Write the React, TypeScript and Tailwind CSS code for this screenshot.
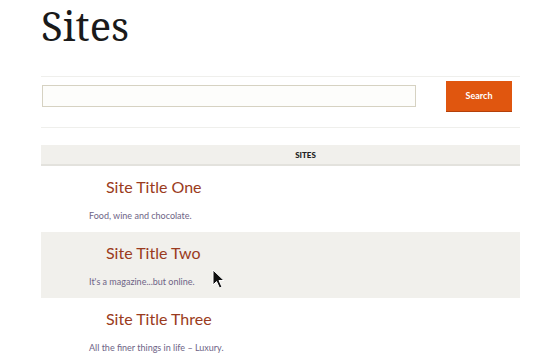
const sites = [
  { title: "Site Title One", desc: "Food, wine and chocolate." },
  { title: "Site Title Two", desc: "It's a magazine...but online." },
  { title: "Site Title Three", desc: "All the finer things in life – Luxury." },
]

export default function App() {
  return (
    <div className="relative w-[559px] h-[360px] overflow-hidden bg-white font-['Lato',sans-serif]">
      <div className="ml-[41px] w-[479px]">
        {/* Heading */}
        <h1 className="h-[76px] text-[40px] leading-[52px] text-[#1a1a1a] font-['Noto_Serif','Liberation_Serif',serif]">
          Sites
        </h1>

        {/* Search */}
        <div className="border-t border-b border-[#efefec] h-[52px] flex items-start pt-[4px]">
          <input
            type="text"
            className="ml-[1px] mt-[4px] w-[374px] h-[22px] border border-[#d6d2c2] bg-[#fdfdfb] outline-none"
          />
          <button className="ml-[30px] w-[66px] h-[30px] bg-[#e0560f] text-white text-[9px] font-bold shadow-[0_1px_0_#b4400a]">
            Search
          </button>
        </div>

        {/* Table */}
        <div className="mt-[17px]">
          <div className="h-[21px] bg-[#f1f0ec] border-b-2 border-[#e3e2dd] flex items-center justify-center text-[8px] font-black text-[#222] pl-[50px]">
            SITES
          </div>
          {sites.map((s, i) => (
            <div key={s.title} className={`h-[66px] ${i % 2 === 1 ? "bg-[#f1f0ec]" : "bg-white"}`}>
              <div className="pt-[10px] pl-[65px] text-[16px] leading-[22px] text-[#9a3b20]">{s.title}</div>
              <div className="pt-[12px] pl-[48px] text-[9px] leading-[12px] text-[#6e6486]">{s.desc}</div>
            </div>
          ))}
        </div>
      </div>

      {/* Cursor */}
      <svg className="absolute left-[212px] top-[269px]" width="14" height="21" viewBox="0 0 14 21">
        <path d="M1 1 L1 16 L4.5 12.5 L7.5 19 L10 18 L7 11.5 L12 11.5 Z" fill="#111" stroke="#fff" strokeWidth="1" />
      </svg>
    </div>
  )
}
